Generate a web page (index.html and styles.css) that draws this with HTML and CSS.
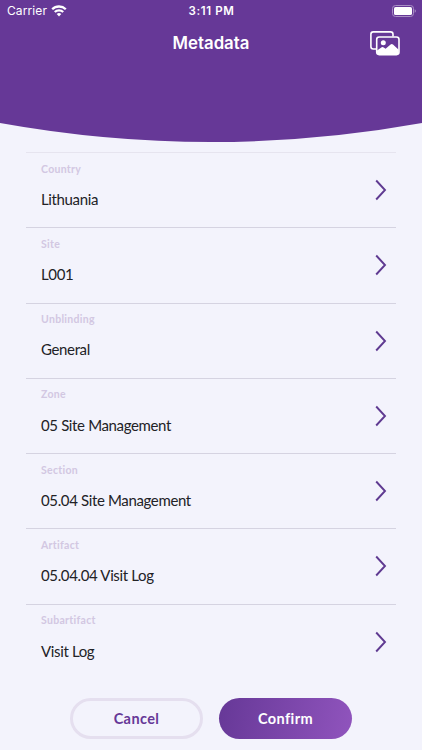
FILE: index.html
```html
<!DOCTYPE html>
<html lang="en">
<head>
<meta charset="utf-8">
<title>Metadata</title>
<link rel="stylesheet" href="styles.css">
</head>
<body>
<svg class="sprite" aria-hidden="true"><symbol id="chevron" viewBox="0 0 12 22"><path d="M1.2 1.5 10 11 1.2 20.5"/></symbol></svg>
<header class="header">
  <svg class="curve" viewBox="0 0 422 142" preserveAspectRatio="none" aria-hidden="true"><path d="M0 0H422V123Q211 161 0 123Z"/></svg>
  <div class="status">
    <div class="carrier"><span>Carrier</span>
      <svg width="16" height="12" viewBox="0 0 16 12"><g fill="none" stroke="#fff" stroke-width="2.3"><path d="M1.2 4.3a9.7 9.7 0 0 1 13.6 0"/><path d="M3.8 7a6 6 0 0 1 8.4 0"/></g><path d="M5.7 9.1a3.3 3.3 0 0 1 4.6 0L8 11.5Z" fill="#fff"/></svg>
    </div>
    <div class="time">3:11 PM</div>
    <svg class="battery" width="24" height="12" viewBox="0 0 24 12"><rect x=".5" y=".5" width="21" height="11" rx="3" fill="none" stroke="#a98fc5"/><rect x="2" y="2" width="18" height="8" rx="1.6" fill="#fff"/><path d="M22.7 4.2q1.2.6 1.2 1.8t-1.2 1.8Z" fill="#a98fc5"/></svg>
  </div>
  <div class="titlebar">
    <h1>Metadata</h1>
    <svg class="gallery" width="30" height="25" viewBox="0 0 30 25"><g fill="none" stroke="#fff" stroke-width="1.6"><path d="M6 18H3.3Q.9 18 .9 15.600V3.300Q.9.9 3.300.9H20.600Q23 .9 23 3.300V5.500"/><rect x="6.700" y="6" width="22.300" height="17.600" rx="2.500"/></g><circle cx="13.300" cy="11.800" r="2.500" fill="#fff"/><path d="M7 21.300V19.500L11.700 16.300Q12.700 15.700 13.700 16.400L15.600 17.800 20.600 13.500Q21.800 12.500 23 13.500L28.700 18.800V21.500Q28.700 23.400 26.800 23.400H9Q7 23.400 7 21.300Z" fill="#fff"/></svg>
  </div>
</header>
<main class="list">
  <div class="row"><div><div class="label">Country</div><div class="value">Lithuania</div></div><svg class="chevron"><use href="#chevron"/></svg></div>
  <div class="row"><div><div class="label">Site</div><div class="value">L001</div></div><svg class="chevron"><use href="#chevron"/></svg></div>
  <div class="row"><div><div class="label">Unblinding</div><div class="value">General</div></div><svg class="chevron"><use href="#chevron"/></svg></div>
  <div class="row"><div><div class="label">Zone</div><div class="value">05 Site Management</div></div><svg class="chevron"><use href="#chevron"/></svg></div>
  <div class="row"><div><div class="label">Section</div><div class="value">05.04 Site Management</div></div><svg class="chevron"><use href="#chevron"/></svg></div>
  <div class="row"><div><div class="label">Artifact</div><div class="value">05.04.04 Visit Log</div></div><svg class="chevron"><use href="#chevron"/></svg></div>
  <div class="row"><div><div class="label">Subartifact</div><div class="value">Visit Log</div></div><svg class="chevron"><use href="#chevron"/></svg></div>
</main>
<footer class="actions">
  <button class="btn cancel">Cancel</button>
  <button class="btn confirm">Confirm</button>
</footer>
</body>
</html>
```
FILE: styles.css
```css
* { box-sizing: border-box; }
body { margin: 0; width: 422px; height: 750px; overflow: hidden; background: #f3f3fc; font-family: Lato, sans-serif; }
.sprite { position: absolute; width: 0; height: 0; }
.header { position: relative; height: 152px; color: #fff; font-family: Inter, sans-serif; }
.curve { position: absolute; inset: 0; width: 422px; height: 142px; fill: #663897; z-index: -1; }
.status { display: grid; grid-template-columns: 1fr auto 1fr; height: 21px; align-items: center; padding: 0 6px 0 7px; font-size: 12px; }
.carrier { display: flex; align-items: center; gap: 4px; letter-spacing: .1px; }
.time { font-weight: 600; font-size: 11.5px; letter-spacing: .6px; }
.battery { justify-self: end; }
.titlebar { display: grid; grid-template-columns: 1fr auto 1fr; align-items: center; height: 43px; padding: 1px 22px 0; }
.titlebar h1 { grid-column: 2; margin: 0; font-size: 16.8px; font-weight: 600; }
.gallery { justify-self: end; }
.list { margin: 0 26px; border-top: 1px solid #e6e4ef; }
.row { display: flex; justify-content: space-between; height: 75.3px; padding: 7.5px 9px 0 15px; border-bottom: 1px solid #d5d3e1; }
.row:last-child { border-bottom: 0; }
.label { height: 16px; line-height: 16px; font-size: 10.5px; font-weight: 700; letter-spacing: .3px; color: #d2c7e2; }
.value { margin-top: 12.3px; line-height: 20px; font-size: 15px; letter-spacing: -.36px; color: #222226; white-space: nowrap; }
.chevron { width: 12px; height: 22px; margin-top: 18.5px; fill: none; stroke: #5f3a91; stroke-width: 1.9; }
.actions { display: flex; gap: 16px; margin: 18px 0 0 70px; }
.btn { width: 133px; height: 41px; padding: 0; border: 0; border-radius: 21px; font: 700 14.5px Lato, sans-serif; letter-spacing: .4px; }
.cancel { background: transparent; border: 3px solid #e5dfef; color: #663897; }
.confirm { background: linear-gradient(100deg, #663897, #9054bd); color: #fff; }
```
